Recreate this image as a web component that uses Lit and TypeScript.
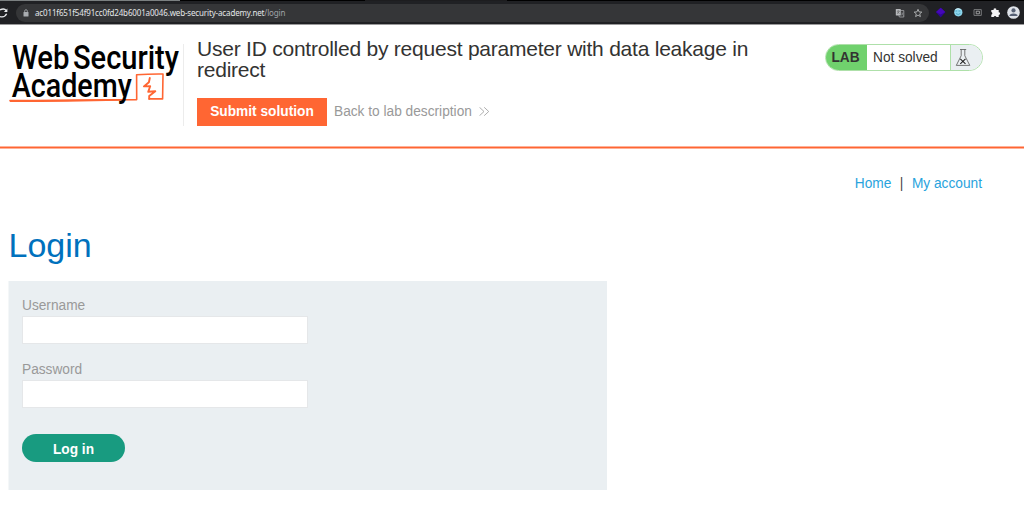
import { LitElement, html, css } from "lit";
import { customElement } from "lit/decorators.js";

@customElement("browser-bar")
class BrowserBar extends LitElement {
  static styles = css`
    :host { display: block; height: 25px; background: #202124; font-family: "Noto Sans", "Open Sans", sans-serif; }
    .tabs { height: 1px; background: linear-gradient(to right, #7b8081 0 180px, #000 180px 365px, #1d1d1f 365px 507px, #000 507px); }
    .row { height: 23px; display: flex; align-items: center; border-bottom: 1px solid #9a9a9b; box-sizing: content-box; }
    .reload { width: 16px; height: 23px; flex: none; }
    .field { display: flex; align-items: center; width: 913px; height: 18px; border-radius: 9px; background: #353638; flex: none; }
    .lock { width: 6px; height: 8px; margin: 0 6px 0 7px; }
    .url { font-size: 8px; line-height: 18px; color: #e4e6e8; white-space: nowrap; letter-spacing: -0.15px; }
    .path { color: #a0a3a8; }
    .inner { width: 32px; height: 18px; margin-left: auto; margin-right: 4px; }
    .ext { width: 95px; height: 23px; flex: none; }
  `;
  render() {
    return html`
      <div class="tabs"></div>
      <div class="row">
        <svg class="reload" viewBox="0 0 16 23" fill="none" stroke="#e8eaed" stroke-width="1.3">
          <path d="M0 8.8Q4.6 6.8 6.2 9.8M0 15.6Q4.8 16.8 6.6 12.8" /><path d="M7.4 7.6v3.4H3.9z" fill="#e8eaed" stroke="none" />
        </svg>
        <div class="field">
          <svg class="lock" viewBox="0 0 6 8"><rect x=".5" y="3" width="5" height="4.4" rx=".5" fill="#a9acb0" /><path d="M1.7 3.2V2a1.3 1.3 0 0 1 2.6 0v1.2" fill="none" stroke="#a9acb0" stroke-width=".8" /></svg>
          <span class="url">ac011f651f54f91cc0fd24b6001a0046.web-security-academy.net<span class="path">/login</span></span>
          <svg class="inner" viewBox="0 0 32 18">
            <rect x="2.8" y="5" width="5" height="6.6" rx=".6" fill="#b8babd" />
            <path d="M7.2 6.6h3.6v6.4H6.4l-.6-1.6" fill="none" stroke="#a9abae" stroke-width=".8" />
            <path d="M4 7.2h2.6M5.3 6.4v.8M6.4 7.3L4.2 9.8M4.4 7.8l2 2" stroke="#444" stroke-width=".5" />
            <path d="M8.2 9h2.2M9.6 9L8.4 11.5M8.8 10l1.5 1.6" stroke="#a9abae" stroke-width=".5" />
            <path d="M25 5.3l1.1 2.6 2.7.2-2.1 1.8.7 2.7-2.4-1.5-2.4 1.5.7-2.7-2.1-1.8 2.7-.2z" fill="none" stroke="#c4c6c8" stroke-width=".8" />
          </svg>
        </div>
        <svg class="ext" viewBox="0 0 95 23">
          <path d="M11.7 6.7l4.6 4.6-4.6 5.1-4.7-5.1z" fill="#2d0695" />
          <path d="M11.7 6.7l4.6 4.3-4.6 2.5L7 11z" fill="#4507b8" />
          <circle cx="29.3" cy="11.3" r="4.1" fill="#8bd5ec" />
          <path d="M26.5 10h1.6m1.4 0h2M27 12.6q2.3 2 4.5-.3" stroke="#3d92b5" stroke-width=".7" fill="none" />
          <path d="M26.5 8.6q2.5-1.8 5 0" stroke="#dcf4fb" fill="none" />
          <path d="M45 8.6h7.3v5.8H45z" fill="none" stroke="#77797b" stroke-width="1" />
          <path d="M47.2 10.2h3.2v2.6h-3.2z" fill="none" stroke="#aaabad" stroke-width=".9" />
          <path d="M62.3 8.9h2.3a1.4 1.4 0 1 1 2.7 0h2.4v2.3a1.4 1.4 0 1 1 0 2.8v2.1h-2.3a1.4 1.4 0 0 0-2.7 0h-2.4v-2.3a1.4 1.4 0 0 0 0-2.7z" fill="#f4f4f5" />
          <circle cx="84.5" cy="11.5" r="6.3" fill="#dfe3e9" />
          <circle cx="84.5" cy="9.4" r="2.1" fill="#566074" />
          <path d="M80.4 15q0-2.5 4.1-2.5t4.1 2.5z" fill="#566074" />
        </svg>
      </div>
    `;
  }
}

@customElement("academy-logo")
class AcademyLogo extends LitElement {
  static styles = css`
    :host { display: block; width: 183px; height: 96px; }
    svg { display: block; overflow: visible; }
    text { font-family: Roboto, sans-serif; font-weight: 500; font-size: 32.5px; fill: #000; }
  `;
  render() {
    return html`
      <svg width="183" height="96" viewBox="0 30 183 96">
        <g fill="none" stroke="#ff6633" stroke-linejoin="round" stroke-linecap="round">
          <path d="M10 100.6C45 100.8 90 99.7 136.7 99.6L136.6 74.8Q150 73.8 163 74L162.6 98.9 149.2 98.9" stroke-width="1.6" />
          <path d="M10.5 101.2Q70 101.2 119 99.9" stroke-width="1.6" />
          <path d="M149.8 78L148.9 82.2 143.9 86.4 150.2 86.2 148.2 91.8 155.3 91.3 149.2 96 149.2 98.9" stroke-width="1.9" />
        </g>
        <text x="12" y="69" textLength="57.5" lengthAdjust="spacingAndGlyphs">Web</text>
        <text x="73" y="69" textLength="106" lengthAdjust="spacingAndGlyphs">Security</text>
        <text x="11.7" y="97" textLength="120" lengthAdjust="spacingAndGlyphs">Academy</text>
      </svg>
    `;
  }
}

@customElement("lab-header")
class LabHeader extends LitElement {
  static styles = css`
    :host { display: flex; height: 121px; box-sizing: border-box; padding-top: 5px; color: #333332; }
    academy-logo { flex: none; }
    .main { border-left: 1px solid #ececec; height: 82px; margin-top: 14px; padding-left: 13px; width: 627px; box-sizing: border-box; }
    h2 { margin: -5px 0 18px; font-size: 21px; letter-spacing: -0.23px; line-height: 20.5px; height: 41px; font-weight: 400; width: 580px; }
    .actions { display: flex; align-items: flex-start; font-size: 13.71px; }
    .submit { width: 130px; height: 28px; line-height: 27px; background: #ff6633; color: #fff; font-weight: 700; text-align: center; }
    .back { margin-left: 7px; line-height: 27px; color: #999; white-space: nowrap; }
    .chev { margin: 9px 0 0 7px; width: 10px; height: 9px; }
    .status { display: flex; margin: 14px 0 0 14.5px; width: 158px; height: 27px; box-sizing: border-box; border: 1px solid #aee0a9; border-radius: 14px; overflow: hidden; font-size: 13.71px; line-height: 25px; }
    .lab { width: 41px; background: #70d16d; font-weight: 700; padding-left: 6px; box-sizing: border-box; }
    .text { width: 83px; padding-left: 6.5px; box-sizing: border-box; white-space: nowrap; }
    .flask { flex: 1; background: #eaeff2; border-left: 1px solid #aee0a9; }
    .flask svg { display: block; }
  `;
  render() {
    return html`
      <academy-logo></academy-logo>
      <div class="main">
        <h2>User ID controlled by request parameter with data leakage in redirect</h2>
        <div class="actions">
          <div class="submit">Submit solution</div>
          <span class="back">Back to lab description</span>
          <svg class="chev" viewBox="0 0 10 9" fill="none" stroke="#999" stroke-width=".8"><path d="M.5.3L5 4.5.5 8.7M5.2.3l4.5 4.2-4.5 4.2" /></svg>
        </div>
      </div>
      <div class="status">
        <div class="lab">LAB</div>
        <div class="text">Not solved</div>
        <div class="flask">
          <svg width="30" height="25" viewBox="951 45 30 25" fill="none" stroke="#555" stroke-width=".8">
            <path d="M960 49.5h6.2M961.2 49.5v6.2L956.3 65.4h13.5L964.8 55.7v-6.2" />
            <path d="M960.3 58.9l5.2 5M965.5 58.9l-5.2 5" stroke="#222" stroke-width="1.1" />
          </svg>
        </div>
      </div>
    `;
  }
}

@customElement("login-form")
class LoginForm extends LitElement {
  static styles = css`
    :host { display: block; box-sizing: border-box; width: 598.5px; height: 209px; padding: 15.5px 13px; border-left: 1px solid #f4f7f8; background: #eaeff2; background-clip: padding-box; font-size: 13.71px; color: #999; }
    label { display: block; line-height: 18px; height: 19px; }
    input { display: block; box-sizing: border-box; width: 286px; height: 28px; margin: 0 0 17px; border: 1px solid #e5e7e9; background: #fff; border-radius: 0; outline: none; font: inherit; }
    button { display: block; width: 103px; height: 28px; margin-top: 26.5px; border: 0; padding: 2px 0 0; border-radius: 14px; background: #189b80; color: #fff; font: 700 13.71px "Liberation Sans", Arial, sans-serif; }
  `;
  render() {
    return html`
      <label for="user">Username</label><input id="user" />
      <label for="pass">Password</label><input id="pass" type="password" />
      <button>Log in</button>
    `;
  }
}

@customElement("app-root")
class AppRoot extends LitElement {
  static styles = css`
    :host { display: block; width: 1024px; height: 531px; overflow: hidden; background: #fff; font-family: "Liberation Sans", Arial, sans-serif; }
    .rule { height: 1px; background: #ff6633; border: solid #ffb199; border-width: 1px 0; }
    nav { display: flex; justify-content: flex-end; gap: 8.5px; margin-top: 26px; padding-right: 42px; font-size: 13.71px; line-height: 18px; color: #29a3dd; }
    .sep { color: #444; }
    h1 { margin: 32px 0 0 8.5px; font-size: 34px; line-height: 40px; font-weight: 400; color: #0071bd; }
    login-form { margin: 16px 0 0 8px; }
  `;
  render() {
    return html`
      <browser-bar></browser-bar>
      <lab-header></lab-header>
      <div class="rule"></div>
      <nav><span>Home</span><span class="sep">|</span><span>My account</span></nav>
      <h1>Login</h1>
      <login-form></login-form>
    `;
  }
}
